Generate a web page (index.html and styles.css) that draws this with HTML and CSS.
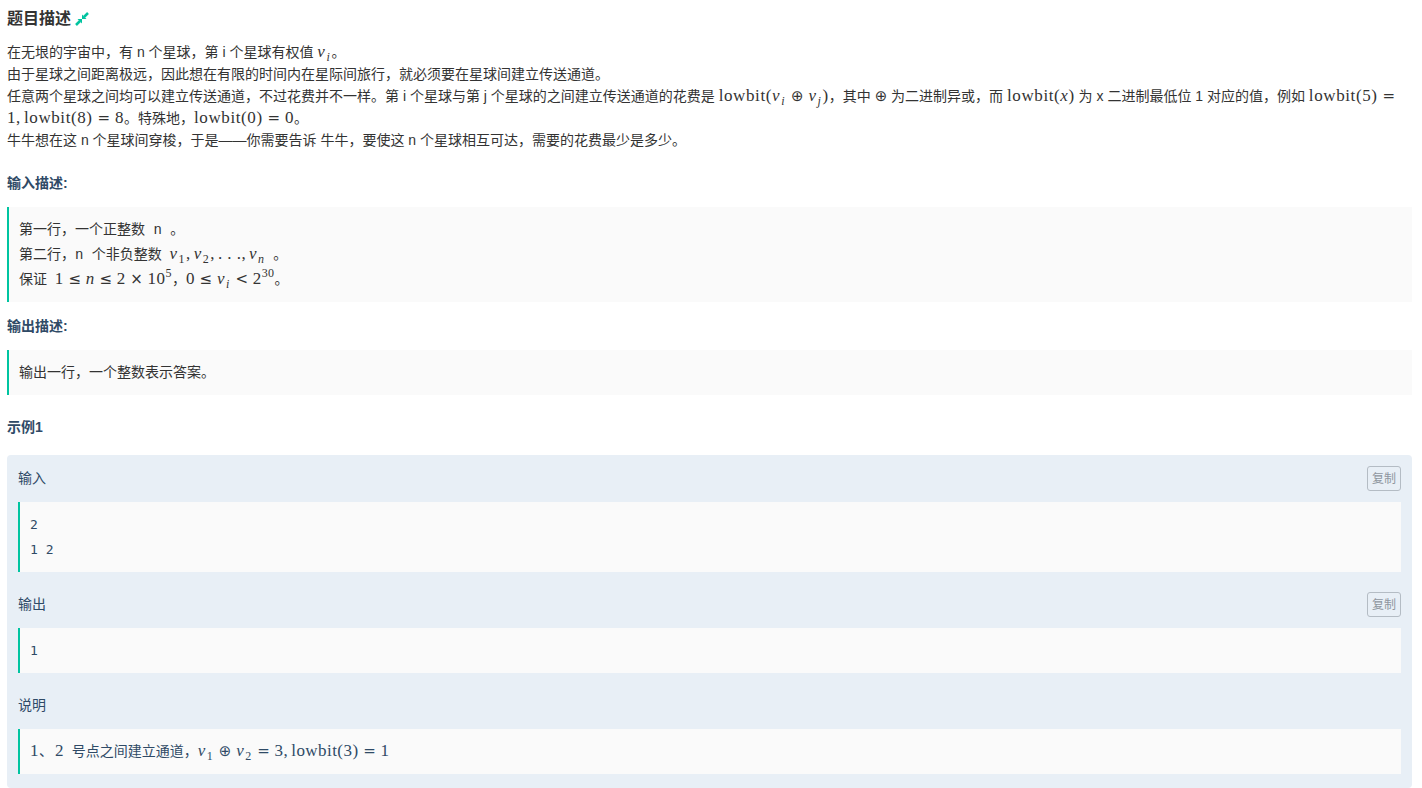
FILE: index.html
```html
<!DOCTYPE html>
<html lang="zh-CN">
<head>
<meta charset="utf-8">
<title>题目描述</title>
<link rel="stylesheet" href="styles.css">
</head>
<body>
<main class="page">
  <h2 class="title">题目描述
    <svg class="pin" viewBox="0 0 14 14" width="14" height="14" aria-hidden="true">
      <path class="pin-line" d="M13 1 9 5" />
      <path class="pin-head" d="M7 2.5 11.5 7H7Z" />
      <path class="pin-line" d="M1 13 5 9" />
      <path class="pin-head" d="M7 11.5 2.5 7H7Z" />
    </svg>
  </h2>
  <div class="desc">
    <div>在无垠的宇宙中，有 n 个星球，第 i 个星球有权值 <span class="m"><i>v<sub>i</sub></i></span>。</div>
    <div>由于星球之间距离极远，因此想在有限的时间内在星际间旅行，就必须要在星球间建立传送通道。</div>
    <div>任意两个星球之间均可以建立传送通道，不过花费并不一样。第 i 个星球与第 j 个星球的之间建立传送通道的花费是 <span class="m">lowbit(<i>v<sub>i</sub></i> <span class="op">⊕</span> <i>v<sub>j</sub></i>)</span>，其中 <span class="m"><span class="op">⊕</span></span> 为二进制异或，而 <span class="m">lowbit(<i>x</i>)</span> 为 x 二进制最低位 1 对应的值，例如 <span class="m">lowbit(5) <span class="op">=</span></span><br><span class="m"><span class="comma">1,</span>lowbit(8) <span class="op">=</span> 8</span>。特殊地，<span class="m">lowbit(0) <span class="op">=</span> 0</span>。</div>
    <div>牛牛想在这 n 个星球间穿梭，于是——你需要告诉 牛牛，要使这 n 个星球相互可达，需要的花费最少是多少。</div>
  </div>

  <h4 class="sec sec-first">输入描述:</h4>
  <div class="quote">
    <div>第一行，一个正整数<code>&nbsp;n&nbsp;</code>。</div>
    <div>第二行，<code>n&nbsp;</code>个非负整数 &nbsp;<span class="m"><i>v</i><sub>1</sub><span class="comma">,</span><i>v</i><sub>2</sub><span class="comma">,</span>. . .<span class="comma">,</span><i>v<sub>n</sub></i></span> &nbsp;。</div>
    <div>保证 &nbsp;<span class="m">1 <span class="op">≤</span> <i>n</i> <span class="op">≤</span> 2 <span class="op">×</span> 10<sup>5</sup></span>，<span class="m">0 <span class="op">≤</span> <i>v<sub>i</sub></i> <span class="op">&lt;</span> 2<sup>30</sup></span>。</div>
  </div>

  <h4 class="sec">输出描述:</h4>
  <div class="quote">
    <div>输出一行，一个整数表示答案。</div>
  </div>

  <h4 class="sec sec-example">示例1</h4>
  <section class="panel">
    <div class="panel-head"><span>输入</span><button class="copy" type="button">复制</button></div>
    <pre class="sample">2
1 2</pre>
    <div class="panel-head"><span>输出</span><button class="copy" type="button">复制</button></div>
    <pre class="sample">1</pre>
    <div class="panel-head panel-head-plain"><span>说明</span></div>
    <div class="sample note"><span class="m">1</span>、<span class="m pad">2</span> &nbsp;号点之间建立通道，<span class="m"><i>v</i><sub>1</sub> <span class="op">⊕</span> <i>v</i><sub>2</sub> <span class="op">=</span> <span class="comma">3,</span>lowbit(3) <span class="op">=</span> 1</span></div>
  </section>
</main>
</body>
</html>
```
FILE: styles.css
```css
* { box-sizing: border-box; }
html, body { margin: 0; background: #fff; }
body {
  font-family: "Liberation Sans", "Noto Sans CJK SC", sans-serif;
  font-size: 14px;
  line-height: 22px;
  color: #333;
}
.page { padding: 8px 10px 0 7px; }
.title {
  margin: 0 0 11px;
  font-size: 16px;
  line-height: 22px;
  font-weight: 700;
  color: #333;
  display: flex;
  align-items: center;
  gap: 4px;
}
.pin-line { fill: none; stroke: #00c4a0; stroke-width: 2.5; }
.pin-head { fill: #00c4a0; }
.desc { margin: 0; }
.sec {
  margin: 13px 0;
  font-size: 14px;
  line-height: 22px;
  font-weight: 700;
  color: #2f4a66;
}
.sec-first { margin-top: 21px; }
.sec-example { margin: 21px 0 17px; }
.quote {
  background: #fafafa;
  border-left: 2px solid #00c4a0;
  padding: 10px;
  line-height: 25px;
}
code {
  font-family: "Liberation Mono", "DejaVu Sans Mono", monospace;
  font-size: 14px;
  line-height: 0;
}
.m {
  font-family: "Liberation Serif", serif;
  font-size: 17px;
  line-height: 0;
  letter-spacing: .6px;
  white-space: nowrap;
}
.quote .m, .note .m { letter-spacing: .45px; }
.m i { font-style: italic; }
.m sub, .m sup { font-size: 12px; line-height: 0; }
.m sub { margin: 0 1px; }
.op { font-family: "DejaVu Sans", sans-serif; font-size: 15px; letter-spacing: 0; }
.comma { margin-right: 3px; }
.pad { padding-left: 2px; }
.panel {
  background: #e8eff6;
  border-radius: 4px;
  padding: 11px 11px 14px;
  color: #2f4a66;
}
.panel-head {
  display: flex;
  justify-content: space-between;
  align-items: center;
  height: 25px;
  margin-bottom: 11px;
}
.panel-head span { margin-bottom: 1px; }
.panel-head-plain { margin-top: 20px; }
.copy {
  width: 34px;
  height: 25px;
  padding: 0;
  border: 1px solid #b4bcc4;
  border-radius: 3px;
  background: transparent;
  color: #8e969e;
  font: 12px/1 "Liberation Sans", "Noto Sans CJK SC", sans-serif;
}
.sample {
  margin: 0 0 20px;
  background: #fafafa;
  border-left: 2px solid #00c4a0;
  padding: 10px;
  font-family: "DejaVu Sans Mono", "Liberation Mono", monospace;
  font-size: 13px;
  line-height: 25px;
}
.sample:last-child { margin-bottom: 0; }
.note { font-family: "Liberation Sans", "Noto Sans CJK SC", sans-serif; font-size: 14px; }
```
